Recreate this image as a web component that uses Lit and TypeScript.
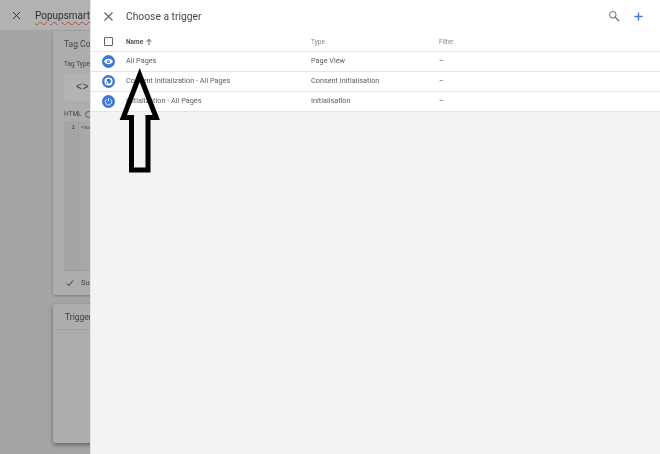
import { LitElement, html, css, svg } from "lit";
import { customElement } from "lit/decorators.js";

const rows = [
  { name: "All Pages", type: "Page View", icon: "eye" },
  { name: "Consent Initialization - All Pages", type: "Consent Initialisation", icon: "globe" },
  { name: "Initialization - All Pages", type: "Initialisation", icon: "power" },
];

const icons: Record<string, unknown> = {
  eye: svg`<path d="M12 7c-3.600 0-6.800 2-8.200 5 1.400 3 4.600 5 8.200 5s6.800-2 8.200-5c-1.400-3-4.600-5-8.200-5z" fill="#fff"/><circle cx="12" cy="12" r="3" fill="#3b78d8"/><circle cx="12" cy="12" r="1.300" fill="#e8eefb"/>`,
  globe: svg`<circle cx="12" cy="12" r="7.500" fill="#fff"/><path d="M9 7.500l5.500-.5 2.500 3.500-2 4.500-3 1.500-1-3.500-2.500-2zM6.500 13l2.500 1.500.5 3-2-1.500z" fill="#3b78d8"/>`,
  power: svg`<path d="M12 5.500v6.500" stroke="#fff" stroke-width="1.600" fill="none"/><path d="M8.200 7.800a6 6 0 1 0 7.600 0" stroke="#fff" stroke-width="1.600" fill="none"/>`,
};

@customElement("app-root")
export class AppRoot extends LitElement {
  static styles = css`
    :host {
      display: flex;
      position: relative;
      width: 660px;
      height: 454px;
      overflow: hidden;
      font-family: Roboto, "Liberation Sans", sans-serif;
      color: #3c4043;
      filter: blur(0.35px);
    }
    .behind {
      flex: 0 0 90px;
      width: 90px;
      overflow: hidden;
      background: #a4a6a5;
      display: flex;
      flex-direction: column;
    }
    .top {
      flex: 0 0 31px;
      display: flex;
      align-items: center;
      width: 260px;
      background: #b2b2b2;
      border-bottom: 1px solid #a3a3a3;
      box-sizing: border-box;
      padding-left: 11px;
      gap: 13px;
      font-size: 10px;
      color: #2e2e2e;
    }
    .top svg { flex: none; }
    .wavy {
      text-decoration: underline wavy #b4453f 0.700px;
      text-underline-offset: 2px;
    }
    .cards {
      width: 260px;
      padding-left: 53px;
      display: flex;
      flex-direction: column;
      gap: 9px;
      box-sizing: border-box;
    }
    .card {
      width: 200px;
      background: #adadad;
      border-radius: 0 0 3px 3px;
      box-shadow: 0 1px 3px rgba(60, 60, 60, 0.4);
    }
    .config {
      height: 264px;
      padding: 8px 0 0 11px;
      box-sizing: border-box;
      font-size: 7.500px;
      color: #444446;
    }
    .config h3 {
      margin: 0 0 11px;
      font-size: 8.500px;
      line-height: 10px;
      font-weight: 400;
    }
    .label { font-size: 6.500px; line-height: 9px; }
    .tagbox {
      margin-top: 5px;
      width: 60px;
      height: 27px;
      background: #b3b3b3;
      border-radius: 2px;
      display: flex;
      align-items: center;
      padding-left: 12px;
      box-sizing: border-box;
      color: #333;
      font-size: 10px;
      font-family: "Liberation Mono", monospace;
      letter-spacing: 0.500px;
    }
    .html-label { margin-top: 9px; display: flex; gap: 3px; align-items: center; }
    .code {
      margin-top: 2px;
      width: 160px;
      height: 150px;
      background: #a8a8a8;
      display: flex;
      font-family: "Liberation Mono", monospace;
      font-size: 6px;
      box-sizing: border-box;
      border-bottom: 1px solid #9d9d9d;
    }
    .gutter {
      width: 15px;
      background: #a5a5a5;
      border-right: 1px solid #9f9f9f;
      text-align: right;
      padding: 3px 3px 0 0;
      box-sizing: border-box;
    }
    .src { padding: 3px 0 0 2px; }
    .support {
      display: flex;
      align-items: center;
      gap: 7px;
      margin-top: 7px;
      padding-left: 2px;
      font-size: 7.500px;
    }
    .trigger {
      height: 139px;
      border-radius: 3px;
      box-shadow: 0 2px 4px rgba(50, 50, 50, 0.55);
    }
    .trigger-head {
      height: 26px;
      border-bottom: 1px solid #a0a0a0;
      padding: 8px 0 0 12px;
      box-sizing: border-box;
      font-size: 8.500px;
      color: #3e3e40;
    }
    .panel {
      flex: 1;
      min-width: 0;
      display: flex;
      flex-direction: column;
      background: #f1f3f4;
      border-left: 1px solid #e3e4e4;
      box-sizing: border-box;
    }
    .head {
      flex: 0 0 32px;
      background: #fff;
      display: flex;
      align-items: center;
      padding: 0 15px 0 12px;
      box-sizing: border-box;
    }
    .title {
      margin-left: 12px;
      font-size: 10.300px;
      color: #44474a;
      flex: 1;
    }
    .actions { display: flex; gap: 12px; align-items: center; }
    .row {
      display: grid;
      grid-template-columns: 35px 185px 128px 1fr;
      align-items: center;
      height: 20px;
      background: #fff;
      border-bottom: 1px solid #e3e4e5;
      box-sizing: border-box;
      font-size: 7.300px;
      color: #5a5d60;
    }
    .row > .t { padding-bottom: 2px; }
    .th { font-size: 6.500px; color: #85888b; }
    .th .nm { font-weight: 700; color: #505356; display: flex; align-items: center; gap: 2px; }
    .cell-i { display: flex; justify-content: center; }
    .box {
      width: 9px;
      height: 9px;
      box-sizing: border-box;
      border: 1px solid #5f6368;
      border-radius: 1px;
    }
    .badge {
      width: 13px;
      height: 13px;
      border-radius: 50%;
      background: #3b78d8;
      display: block;
    }
    .arrow {
      position: absolute;
      left: 115px;
      top: 63px;
    }
  `;

  render() {
    return html`
      <div class="behind">
        <div class="top">
          <svg width="11" height="11" viewBox="0 0 11 11"><path d="M2 2l7 7M9 2l-7 7" stroke="#333" stroke-width="1"/></svg>
          <span class="wavy">Popupsmart</span>
        </div>
        <div class="cards">
          <div class="card config">
            <h3>Tag Configuration</h3>
            <div class="label">Tag Type</div>
            <div class="tagbox">&lt;&gt;</div>
            <div class="label html-label">HTML
              <svg width="7" height="7" viewBox="0 0 7 7"><circle cx="3.500" cy="3.500" r="3" fill="none" stroke="#444" stroke-width=".8"/></svg>
            </div>
            <div class="code"><div class="gutter">1</div><div class="src">&lt;script&gt;</div></div>
            <div class="support">
              <svg width="8" height="8" viewBox="0 0 8 8"><path d="M1 4.500l2 2 4-5" stroke="#333" stroke-width="1" fill="none"/></svg>
              <span>Support document.write</span>
            </div>
          </div>
          <div class="card trigger"><div class="trigger-head">Triggering</div></div>
        </div>
      </div>
      <div class="panel">
        <div class="head">
          <svg width="11" height="11" viewBox="0 0 11 11"><path d="M1.500 1.500l8 8M9.500 1.500l-8 8" stroke="#5f6368" stroke-width="1.100"/></svg>
          <div class="title">Choose a trigger</div>
          <div class="actions">
            <svg width="12" height="12" viewBox="0 0 12 12"><circle cx="4.800" cy="4.800" r="3.300" fill="none" stroke="#5f6368" stroke-width="1"/><path d="M7.300 7.300l3.700 3.700" stroke="#5f6368" stroke-width="1.100"/></svg>
            <svg width="13" height="13" viewBox="0 0 13 13"><path d="M6.500 2.500v8M2.500 6.500h8" stroke="#3b78d8" stroke-width="1.300"/></svg>
          </div>
        </div>
        <div class="row th">
          <div class="cell-i"><div class="box"></div></div>
          <div class="nm">Name
            <svg width="8" height="8" viewBox="0 0 8 8"><path d="M4 7V1.500M1.700 3.700L4 1.300l2.300 2.400" fill="none" stroke="#44474a" stroke-width=".9"/></svg>
          </div>
          <div>Type</div>
          <div>Filter</div>
        </div>
        ${rows.map(
          (r) => html`
            <div class="row">
              <div class="cell-i"><svg class="badge" viewBox="0 0 24 24">${icons[r.icon]}</svg></div>
              <div class="t">${r.name}</div>
              <div class="t">${r.type}</div>
              <div class="t">–</div>
            </div>
          `
        )}
      </div>
      <svg class="arrow" width="50" height="114" viewBox="115 63 50 114">
        <path d="M139.700 75 L123.300 117.500 H131.500 V170 H148 V117.500 H156.200 Z" fill="none" stroke="#000" stroke-width="5"/>
      </svg>
    `;
  }
}
